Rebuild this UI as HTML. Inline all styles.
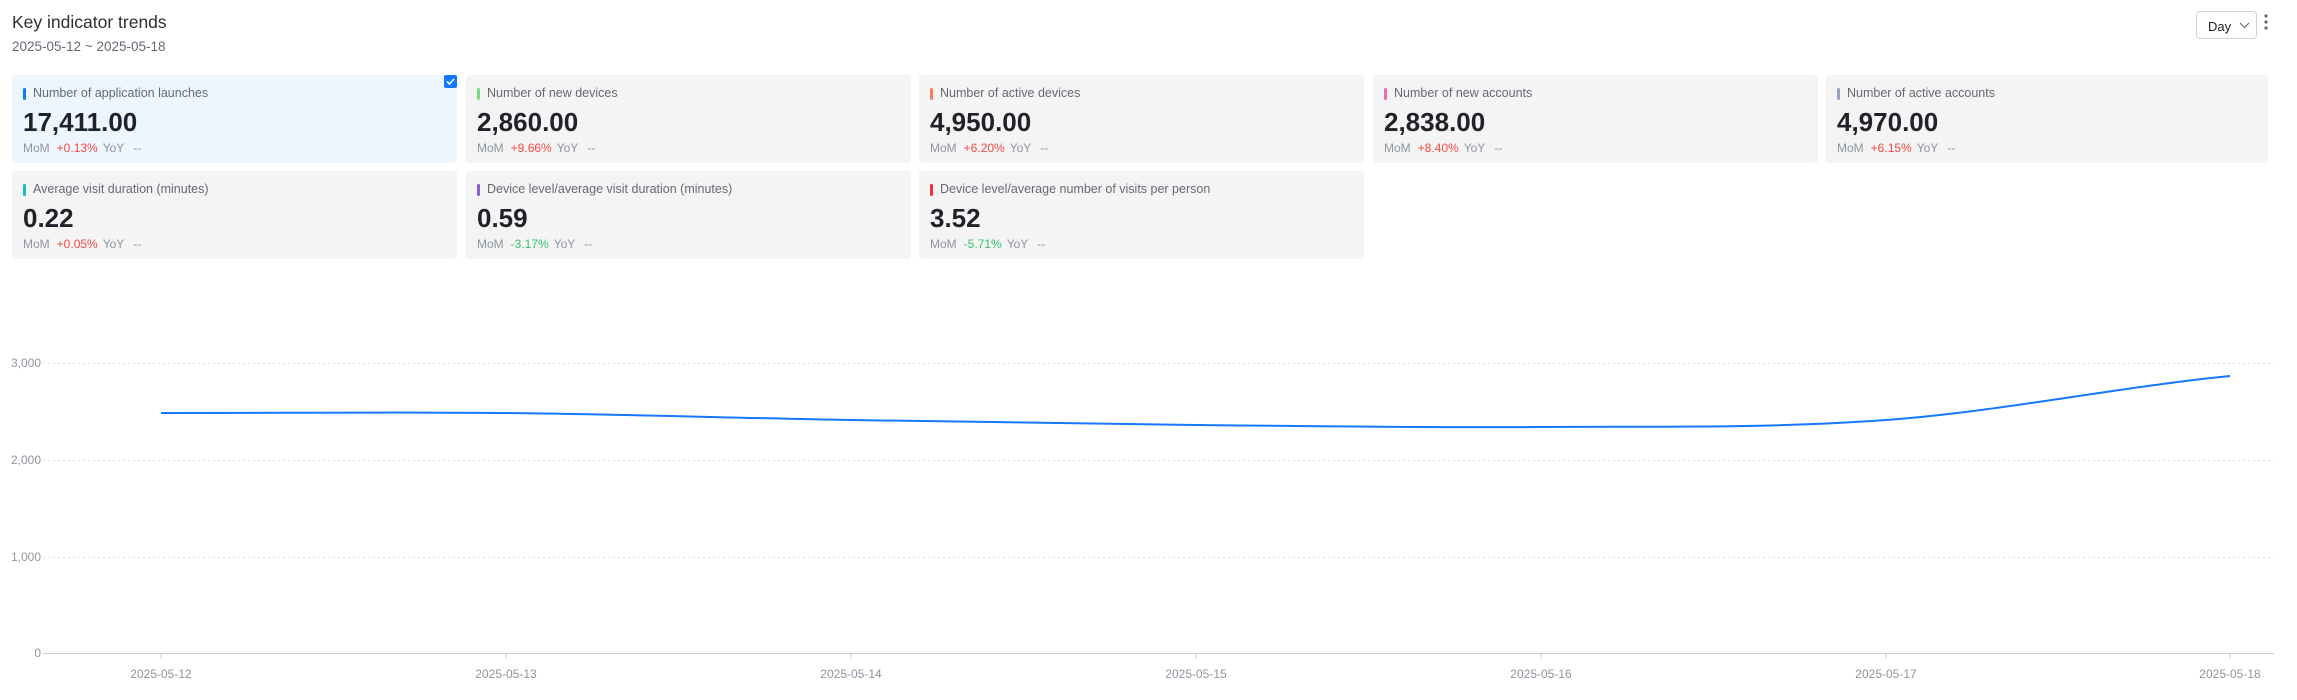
<!DOCTYPE html>
<html><head><meta charset="utf-8"><style>
*{margin:0;padding:0;box-sizing:border-box}
body{width:2297px;height:700px;background:#fff;font-family:"Liberation Sans",sans-serif;position:relative;overflow:hidden}
.t{position:absolute;left:12px;top:12px;font-size:17.5px;color:#2b2f36}
.d{position:absolute;left:12px;top:39px;font-size:13.5px;color:#646a73}
.day{position:absolute;left:2196px;top:11px;width:61px;height:28px;border:1px solid #d0d3d6;border-radius:4px;font-size:13px;color:#1f2329;padding:7px 0 0 11px}
.day svg{position:absolute;left:42px;top:10px}
.dots{position:absolute;left:2264px;top:14px}
.c{position:absolute;width:445px;height:88px;background:#f4f4f5;border-radius:3px}
.c.s{background:#edf5fd}
.bar{position:absolute;left:11px;top:13px;width:3px;height:12px;border-radius:2px}
.l{position:absolute;left:21px;top:11px;font-size:12.5px;color:#646a73;white-space:nowrap}
.v{position:absolute;left:11px;top:32px;font-size:26px;font-weight:bold;color:#1f2329}
.m{position:absolute;left:11px;top:66px;font-size:12px;color:#8f959e;white-space:nowrap}
.m b{font-weight:normal;margin:0 5px 0 7px}
.r{color:#f54a45}.g{color:#34c36b}
.k{position:absolute;right:0;top:0;width:13px;height:13px;background:#1677ff;border-radius:2px}
</style></head><body>
<div class="t">Key indicator trends</div>
<div class="d">2025-05-12 ~ 2025-05-18</div>
<div class="day">Day<svg width="11" height="7" viewBox="0 0 11 7"><path d="M1 1l4.5 4.5L10 1" stroke="#646a73" stroke-width="1.2" fill="none"/></svg></div>
<svg class="dots" width="4" height="16"><circle cx="2" cy="2" r="1.6" fill="#646a73"/><circle cx="2" cy="8" r="1.6" fill="#646a73"/><circle cx="2" cy="14" r="1.6" fill="#646a73"/></svg>

<div class="c s" style="left:12px;top:75px"><div class="bar" style="background:#1677ff"></div><div class="l">Number of application launches</div><div class="v">17,411.00</div><div class="m">MoM<b class="r">+0.13%</b>YoY<b style="margin-left:9px">--</b></div><div class="k"><svg width="13" height="13"><path d="M3 6.5l2.5 2.5L10 4" stroke="#fff" stroke-width="1.6" fill="none"/></svg></div></div>
<div class="c" style="left:466px;top:75px"><div class="bar" style="background:#7bd98a"></div><div class="l">Number of new devices</div><div class="v">2,860.00</div><div class="m">MoM<b class="r">+9.66%</b>YoY<b style="margin-left:9px">--</b></div></div>
<div class="c" style="left:919px;top:75px"><div class="bar" style="background:#ff7b53"></div><div class="l">Number of active devices</div><div class="v">4,950.00</div><div class="m">MoM<b class="r">+6.20%</b>YoY<b style="margin-left:9px">--</b></div></div>
<div class="c" style="left:1373px;top:75px"><div class="bar" style="background:#f06ab5"></div><div class="l">Number of new accounts</div><div class="v">2,838.00</div><div class="m">MoM<b class="r">+8.40%</b>YoY<b style="margin-left:9px">--</b></div></div>
<div class="c" style="left:1826px;top:75px;width:442px"><div class="bar" style="background:#9aa0c3"></div><div class="l">Number of active accounts</div><div class="v">4,970.00</div><div class="m">MoM<b class="r">+6.15%</b>YoY<b style="margin-left:9px">--</b></div></div>

<div class="c" style="left:12px;top:171px"><div class="bar" style="background:#15bcc6"></div><div class="l">Average visit duration (minutes)</div><div class="v">0.22</div><div class="m">MoM<b class="r">+0.05%</b>YoY<b style="margin-left:9px">--</b></div></div>
<div class="c" style="left:466px;top:171px"><div class="bar" style="background:#8a5cd1"></div><div class="l">Device level/average visit duration (minutes)</div><div class="v">0.59</div><div class="m">MoM<b class="g">-3.17%</b>YoY<b style="margin-left:9px">--</b></div></div>
<div class="c" style="left:919px;top:171px"><div class="bar" style="background:#f5303a"></div><div class="l">Device level/average number of visits per person</div><div class="v">3.52</div><div class="m">MoM<b class="g">-5.71%</b>YoY<b style="margin-left:9px">--</b></div></div>

<svg style="position:absolute;left:0;top:0" width="2297" height="700" font-family="Liberation Sans, sans-serif" font-size="12" fill="#8f959e">
<g stroke="#dcdee2" stroke-dasharray="2 3" stroke-width="1">
<line x1="43" y1="363.5" x2="2274" y2="363.5"/><line x1="43" y1="460.5" x2="2274" y2="460.5"/><line x1="43" y1="557.5" x2="2274" y2="557.5"/>
</g>
<line x1="43" y1="653.5" x2="2274" y2="653.5" stroke="#c9ccd1"/>
<g stroke="#c9ccd1"><line x1="161" y1="654" x2="161" y2="659"/><line x1="506" y1="654" x2="506" y2="659"/><line x1="851" y1="654" x2="851" y2="659"/><line x1="1196" y1="654" x2="1196" y2="659"/><line x1="1541" y1="654" x2="1541" y2="659"/><line x1="1886" y1="654" x2="1886" y2="659"/><line x1="2230" y1="654" x2="2230" y2="659"/></g>
<g text-anchor="end"><text x="41" y="367">3,000</text><text x="41" y="464">2,000</text><text x="41" y="561">1,000</text><text x="41" y="657">0</text></g>
<g text-anchor="middle"><text x="161" y="678">2025-05-12</text><text x="506" y="678">2025-05-13</text><text x="851" y="678">2025-05-14</text><text x="1196" y="678">2025-05-15</text><text x="1541" y="678">2025-05-16</text><text x="1886" y="678">2025-05-17</text><text x="2230" y="678">2025-05-18</text></g>
<path d="M161 413C276 413 391 412 506 413C621 414.2 736 418 851 420C966 422 1081 423.8 1196 425C1311 426.2 1426 427.8 1541 427C1656 426.2 1771 428.5 1886 420C2001 411.5 2115 387.5 2230 376" stroke="#1677ff" stroke-width="2" fill="none"/>
</svg>
</body></html>
